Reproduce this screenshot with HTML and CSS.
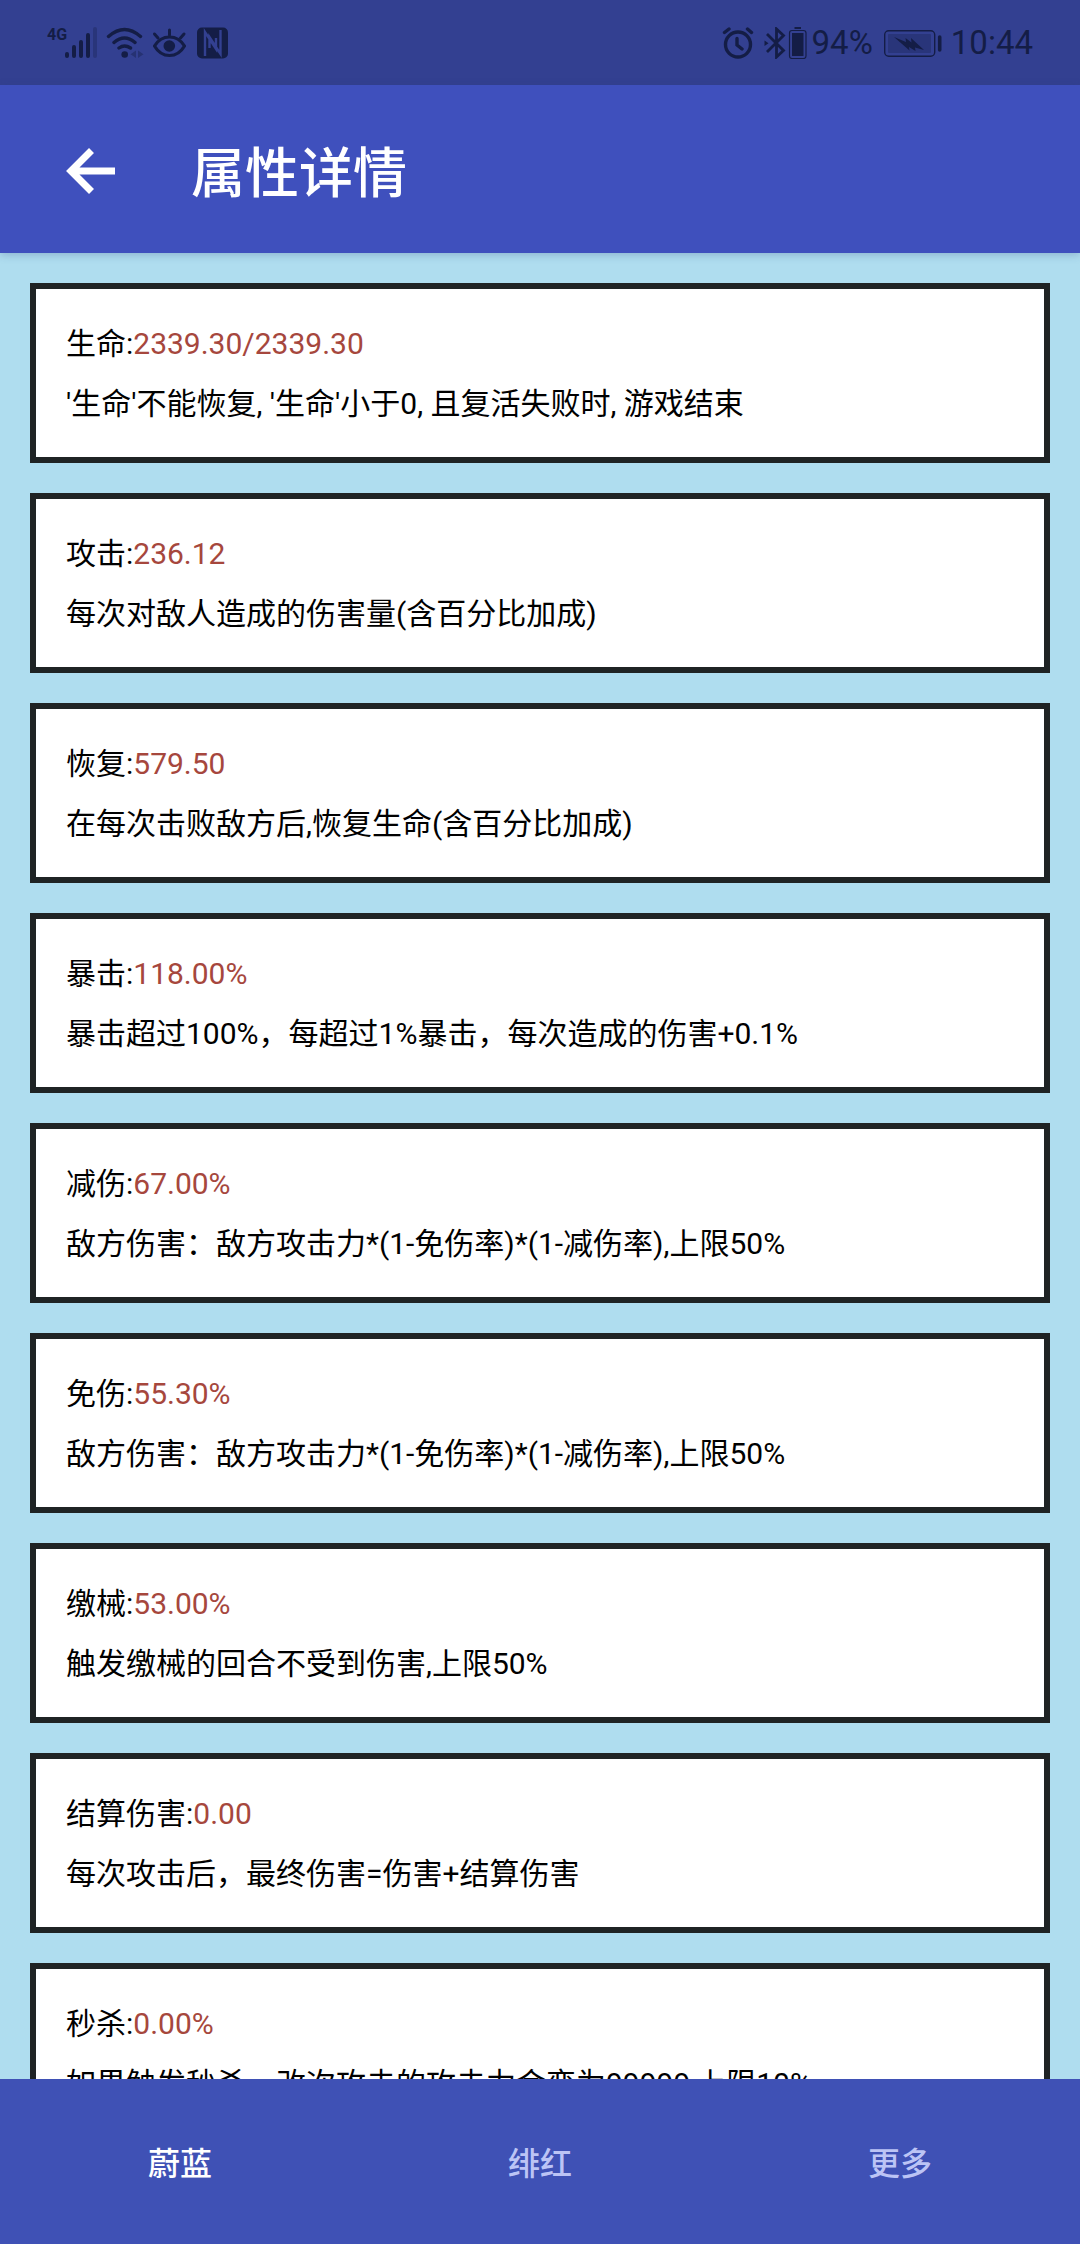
FILE: index.html
```html
<!DOCTYPE html>
<html lang="zh-CN">
<head>
<meta charset="utf-8">
<meta name="viewport" content="width=device-width, initial-scale=1">
<title>属性详情</title>
<link rel="stylesheet" href="styles.css">
</head>
<body>
<div class="status-bar">
  <div class="status-group status-group-left">
    <div class="signal">
      <span class="network">4G</span>
      <svg width="33" height="32" viewBox="65 26 33 32" fill="none" stroke="currentColor" stroke-width="4" stroke-linecap="round" aria-hidden="true">
        <path d="M67 53v2M74 46v9M81 41v14M88 34v21"/>
        <path d="M95 28v27" opacity=".3"/>
      </svg>
    </div>
    <svg width="38" height="32" viewBox="106 26 38 32" fill="none" stroke="currentColor" stroke-width="3.4" stroke-linecap="round" aria-hidden="true">
      <path d="M108.500 35.500Q124.500 21.500 140.500 35.500M114 41.500Q124.500 32.500 135 41.500M119 47Q124.500 43 130.500 47"/>
      <circle cx="124.700" cy="53.500" r="3.300" fill="currentColor" stroke="none"/>
      <path d="M136 49.500v7.500l-5.500-3.700zM138 49.500v7.500l5.500-3.700z" fill="currentColor" stroke="none" opacity=".4"/>
    </svg>
    <svg width="35" height="32" viewBox="152 26 35 32" fill="none" stroke="currentColor" stroke-width="3.200" stroke-linecap="round" stroke-linejoin="round" aria-hidden="true">
      <path d="M154.500 45Q160 36 169.500 36T184.500 45Q179 54.500 169.500 54.500T154.500 45z"/>
      <path d="M154.500 33l3.500 4M169.500 29v5M184 33l-3.500 4" stroke-width="3"/>
      <circle cx="169.300" cy="45" r="5.800" fill="currentColor" stroke="none"/>
    </svg>
    <svg width="34" height="32" viewBox="195 26 34 32" aria-hidden="true">
      <rect x="197" y="26.500" width="31" height="31" rx="5" fill="currentColor"/>
      <path d="M205 55V31l11 17V37M220.500 29v24l-11-17v11" fill="none" stroke="#334091" stroke-width="2.400"/>
    </svg>
  </div>
  <div class="status-group status-group-right">
    <svg width="38" height="32" viewBox="720 26 38 32" fill="none" stroke="currentColor" stroke-width="3.400" stroke-linecap="round" aria-hidden="true">
      <circle cx="736" cy="43.500" r="12.500"/>
      <path d="M735 37.500V44l5 4M722.500 31.500l4.500-3.500M749.500 31.500L745.500 28"/>
    </svg>
    <svg width="44" height="32" viewBox="762 26 44 32" fill="none" stroke="currentColor" aria-hidden="true">
      <path d="M765 33l16.500 16.500-7 6.500V28l7 6.500L765 51" stroke-width="2.800"/>
      <path d="M762.500 39.500v5.500l4-2.700z" fill="currentColor" stroke="none"/>
      <rect x="787.500" y="29.500" width="16.500" height="28" rx="2.500" stroke-width="1.200"/>
      <rect x="790" y="32" width="11.500" height="23" fill="currentColor" stroke="none"/>
      <path d="M792.500 27h6.500" stroke-width="2"/>
    </svg>
    <span>94%</span>
    <svg width="70" height="32" viewBox="875 26 70 32" aria-hidden="true">
      <rect x="882.700" y="29.700" width="50" height="25.600" rx="4" fill="none" stroke="currentColor" stroke-width="1.400"/>
      <rect x="886" y="33" width="43" height="19" rx="1" fill="currentColor" opacity=".3"/>
      <path d="M892 36l12 5-.5-4 6 4.500-.5-4.500L922 49l-9-2.500.5 3.500-6.500-4 .5 3.500z" fill="currentColor"/>
      <path d="M937.700 36v13" stroke="currentColor" stroke-width="3.600" stroke-linecap="round"/>
    </svg>
    <time>10:44</time>
  </div>
</div>
<header class="app-bar">
  <button class="back" type="button" aria-label="返回">
    <svg width="50" height="48" viewBox="66 147 50 48" fill="none" stroke="currentColor" stroke-width="7" aria-hidden="true">
      <path d="M115 171H70M91.500 150.500L71 171l20.500 20.500"/>
    </svg>
  </button>
  <h1 class="title">属性详情</h1>
</header>
<main class="stats">
  <section class="card"><p>生命:<span class="value">2339.30/2339.30</span></p><p>'生命'不能恢复, '生命'小于0, 且复活失败时, 游戏结束</p></section>
  <section class="card"><p>攻击:<span class="value">236.12</span></p><p>每次对敌人造成的伤害量(含百分比加成)</p></section>
  <section class="card"><p>恢复:<span class="value">579.50</span></p><p>在每次击败敌方后,恢复生命(含百分比加成)</p></section>
  <section class="card"><p>暴击:<span class="value">118.00%</span></p><p>暴击超过100%，每超过1%暴击，每次造成的伤害+0.1%</p></section>
  <section class="card"><p>减伤:<span class="value">67.00%</span></p><p>敌方伤害：敌方攻击力*(1-免伤率)*(1-减伤率),上限50%</p></section>
  <section class="card"><p>免伤:<span class="value">55.30%</span></p><p>敌方伤害：敌方攻击力*(1-免伤率)*(1-减伤率),上限50%</p></section>
  <section class="card"><p>缴械:<span class="value">53.00%</span></p><p>触发缴械的回合不受到伤害,上限50%</p></section>
  <section class="card"><p>结算伤害:<span class="value">0.00</span></p><p>每次攻击后，最终伤害=伤害+结算伤害</p></section>
  <section class="card"><p>秒杀:<span class="value">0.00%</span></p><p>如果触发秒杀，改次攻击的攻击力会变为99999,上限10%</p></section>
</main>
<nav class="tabs">
  <button class="tab tab-active" type="button">蔚蓝</button>
  <button class="tab" type="button">绯红</button>
  <button class="tab" type="button">更多</button>
</nav>
</body>
</html>
```
FILE: styles.css
```css
* {
  box-sizing: border-box;
}

body {
  margin: 0;
  height: 100vh;
  display: flex;
  flex-direction: column;
  background: #afddef;
  color: #000;
  font-family: Roboto, "Noto Sans CJK SC", sans-serif;
  font-size: 30px;
  line-height: 60px;
}

h1,
p {
  margin: 0;
}

button {
  border: 0;
  padding: 0;
  background: none;
  font: inherit;
  color: inherit;
}

svg {
  display: block;
  flex: none;
}

.status-bar {
  display: flex;
  justify-content: space-between;
  align-items: center;
  flex: none;
  height: 85px;
  padding: 0 47px;
  background: #334091;
  color: #141d46;
  font-size: 33px;
  line-height: 40px;
}

.status-group {
  display: flex;
  align-items: center;
}

.status-group-left {
  gap: 8px;
}

.status-group-right {
  gap: 4px;
}

.signal {
  display: flex;
  align-items: flex-start;
}

.network {
  width: 18px;
  font-size: 16px;
  font-weight: 700;
  line-height: 16px;
}

.app-bar {
  position: relative;
  z-index: 1;
  display: flex;
  align-items: center;
  gap: 75px;
  flex: none;
  height: 168px;
  padding: 4px 66px 0;
  background: #3f50bd;
  color: #fff;
  box-shadow: 0 2px 8px rgba(40, 60, 120, 0.25);
}

.title {
  padding-top: 8px;
  font-size: 54px;
  font-weight: 500;
  line-height: 80px;
}

.stats {
  flex: 1;
  min-height: 0;
  overflow: hidden;
  display: flex;
  flex-direction: column;
  gap: 30px;
  padding: 30px;
}

.card {
  flex: none;
  padding: 25px 30px 23px;
  border: 6px solid #1f2324;
  background: #fff;
}

.value {
  color: #a6473d;
}

.tabs {
  display: grid;
  grid-template-columns: repeat(3, 1fr);
  flex: none;
  height: 165px;
  background: #3f51b5;
}

.tab {
  padding-top: 4px;
  color: #bcc4f5;
  font-size: 32px;
  font-weight: 500;
}

.tab-active {
  color: #fff;
}
```
